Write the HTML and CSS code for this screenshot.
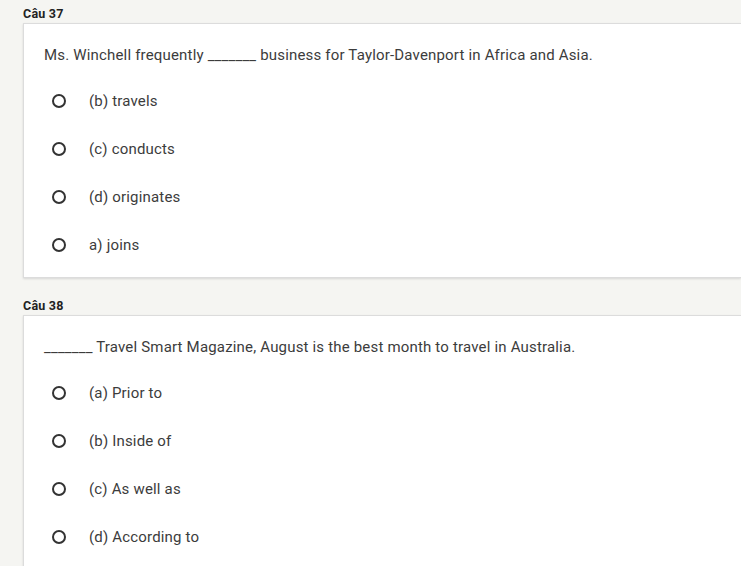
FILE: index.html
```html
<!DOCTYPE html>
<html lang="vi">
<head>
<meta charset="utf-8">
<link rel="stylesheet" href="styles.css">
</head>
<body>
<div class="page">
  <section class="question">
    <div class="q-label">Câu 37</div>
    <div class="card">
      <div class="q-text">Ms. Winchell frequently _______ business for Taylor-Davenport in Africa and Asia.</div>
      <ul class="options">
        <li class="option"><span class="radio"></span><span class="opt-text">(b) travels</span></li>
        <li class="option"><span class="radio"></span><span class="opt-text">(c) conducts</span></li>
        <li class="option"><span class="radio"></span><span class="opt-text">(d) originates</span></li>
        <li class="option"><span class="radio"></span><span class="opt-text">a) joins</span></li>
      </ul>
    </div>
  </section>
  <section class="question">
    <div class="q-label">Câu 38</div>
    <div class="card">
      <div class="q-text">_______ Travel Smart Magazine, August is the best month to travel in Australia.</div>
      <ul class="options">
        <li class="option"><span class="radio"></span><span class="opt-text">(a) Prior to</span></li>
        <li class="option"><span class="radio"></span><span class="opt-text">(b) Inside of</span></li>
        <li class="option"><span class="radio"></span><span class="opt-text">(c) As well as</span></li>
        <li class="option"><span class="radio"></span><span class="opt-text">(d) According to</span></li>
      </ul>
    </div>
  </section>
</div>
</body>
</html>
```
FILE: styles.css
```css
html, body {
  margin: 0;
  padding: 0;
  background: #f5f5f2;
  overflow: hidden;
  font-family: Roboto, "Liberation Sans", sans-serif;
}
.page {
  padding: 7px 0 0 23px;
  display: flex;
  flex-direction: column;
  gap: 21px;
}
.q-label {
  font-size: 12.5px;
  font-weight: 700;
  line-height: 14px;
  color: #222;
  margin-bottom: 2px;
  letter-spacing: 0.2px;
}
.card {
  background: #fff;
  border: 1px solid #dcdcdc;
  border-right: none;
  box-shadow: 0 1px 2px rgba(0,0,0,0.12);
  padding: 21px 20px 8px 20px;
}
.q-text {
  font-size: 15px;
  line-height: 20px;
  color: #3c3c3c;
  margin-bottom: 12px;
  letter-spacing: 0.18px;
}
.options {
  list-style: none;
  margin: 0;
  padding: 0;
}
.option {
  height: 48px;
  display: flex;
  align-items: center;
  padding-left: 8px;
}
.radio {
  width: 10px;
  height: 10px;
  border: 2px solid #333;
  border-radius: 50%;
  margin-right: 23px;
  flex: none;
}
.opt-text {
  font-size: 15px;
  color: #3c3c3c;
  letter-spacing: 0.18px;
}
```
